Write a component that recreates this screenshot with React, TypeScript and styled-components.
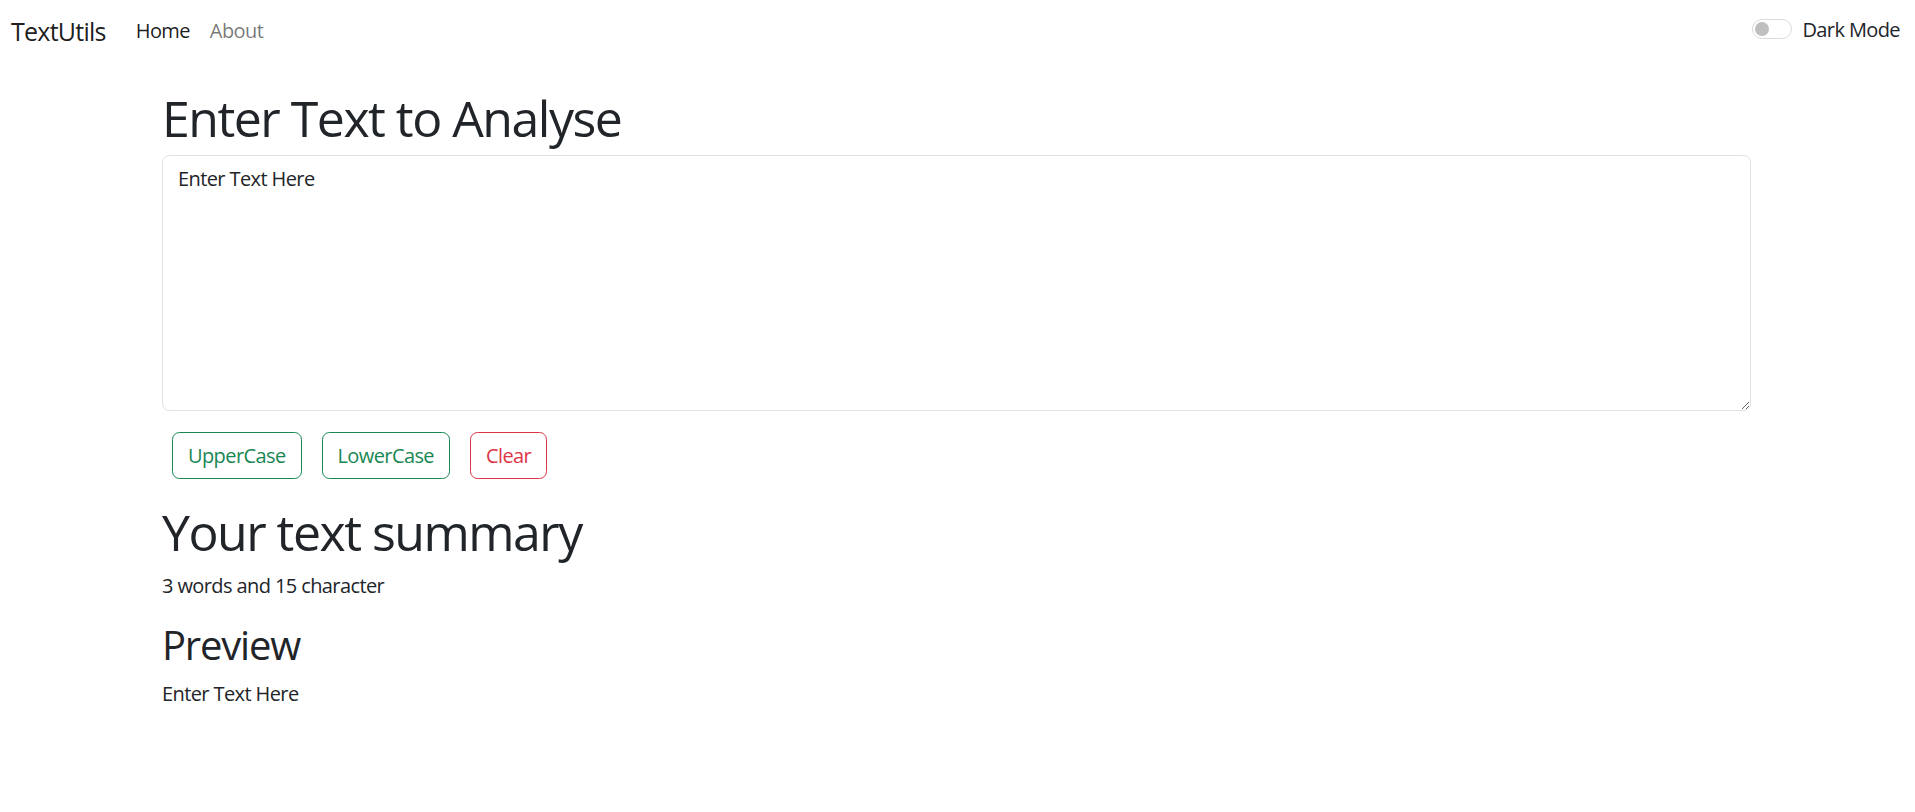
import React, { useState } from "react";
import styled, { createGlobalStyle } from "styled-components";

const GlobalStyle = createGlobalStyle`
  * { box-sizing: border-box; letter-spacing: -0.03em; }
  body {
    margin: 0;
    background: #ffffff;
    color: #212529;
    font-family: "Open Sans", "Noto Sans", sans-serif;
    font-size: 20px;
    line-height: 30px;
  }
`;

const Navbar = styled.nav`
  display: flex;
  align-items: center;
  justify-content: space-between;
  height: 60px;
  padding: 0 15px 0 11px;
`;

const NavLeft = styled.div`
  display: flex;
  align-items: center;
`;

const Brand = styled.a`
  font-size: 25px;
  line-height: 30px;
  color: rgba(0, 0, 0, 0.9);
  text-decoration: none;
  margin-right: 20px;
  padding-top: 2px;
`;

const NavList = styled.ul`
  display: flex;
  list-style: none;
  margin: 0;
  padding: 0;
`;

const NavLink = styled.a<{ $active?: boolean }>`
  display: block;
  padding: 2px 10px 0;
  font-size: 20px;
  line-height: 24px;
  text-decoration: none;
  color: ${(p) => (p.$active ? "rgba(0, 0, 0, 0.9)" : "rgba(0, 0, 0, 0.55)")};
`;

const SwitchLabel = styled.label`
  display: flex;
  align-items: center;
  gap: 10px;
  font-size: 20px;
  line-height: 24px;
  color: #212529;
  cursor: pointer;
`;

const SwitchTrack = styled.span`
  display: flex;
  align-items: center;
  width: 40px;
  height: 20px;
  padding-left: 2px;
  border: 1px solid #dcdcdc;
  border-radius: 10px;
  background: #ffffff;
  margin-top: -3px;
`;

const SwitchKnob = styled.span`
  width: 14px;
  height: 14px;
  border-radius: 50%;
  background: #bfbfbf;
`;

const Main = styled.main`
  width: 1589px;
  margin-left: 162px;
  padding-top: 28px;
`;

const Title = styled.h1`
  margin: 0 0 7px;
  font-size: 50px;
  line-height: 60px;
  font-weight: 400;
`;

const TextArea = styled.textarea`
  display: block;
  width: 100%;
  height: 256px;
  padding: 8px 15px;
  border: 1px solid #dee2e6;
  border-radius: 7.5px;
  font-family: inherit;
  font-size: 20px;
  line-height: 30px;
  color: #212529;
  resize: vertical;
  outline: none;
`;

const ButtonRow = styled.div`
  display: flex;
  gap: 20px;
  padding: 0 10px;
  margin-top: 21px;
`;

const OutlineButton = styled.button<{ $tone: "success" | "danger" }>`
  padding: 7.5px 15px;
  font-family: inherit;
  font-size: 20px;
  line-height: 30px;
  background: transparent;
  border-radius: 7.5px;
  cursor: pointer;
  color: ${(p) => (p.$tone === "success" ? "#198754" : "#dc3545")};
  border: 1px solid ${(p) => (p.$tone === "success" ? "#198754" : "#dc3545")};
`;

const Summary = styled.section`
  margin-top: 23px;
`;

const SummaryTitle = styled.h1`
  margin: 0 0 9px;
  font-size: 50px;
  line-height: 60px;
  font-weight: 400;
`;

const Text = styled.p`
  margin: 0 0 20px;
  font-size: 20px;
  line-height: 30px;
`;

const SubTitle = styled.h2`
  margin: 0 0 10px;
  font-size: 40px;
  line-height: 48px;
  font-weight: 400;
`;

export default function App() {
  const [text, setText] = useState("Enter Text Here");
  const words = text.split(/\s+/).filter((w) => w.length > 0).length;

  return (
    <>
      <GlobalStyle />
      <Navbar>
        <NavLeft>
          <Brand href="#">TextUtils</Brand>
          <NavList>
            <li>
              <NavLink href="#" $active>
                Home
              </NavLink>
            </li>
            <li>
              <NavLink href="#">About</NavLink>
            </li>
          </NavList>
        </NavLeft>
        <SwitchLabel>
          <SwitchTrack>
            <SwitchKnob />
          </SwitchTrack>
          Dark Mode
        </SwitchLabel>
      </Navbar>
      <Main>
        <Title>Enter Text to Analyse</Title>
        <TextArea value={text} onChange={(e) => setText(e.target.value)} rows={8} />
        <ButtonRow>
          <OutlineButton $tone="success" onClick={() => setText(text.toUpperCase())}>
            UpperCase
          </OutlineButton>
          <OutlineButton $tone="success" onClick={() => setText(text.toLowerCase())}>
            LowerCase
          </OutlineButton>
          <OutlineButton $tone="danger" onClick={() => setText("")}>
            Clear
          </OutlineButton>
        </ButtonRow>
        <Summary>
          <SummaryTitle>Your text summary</SummaryTitle>
          <Text>
            {words} words and {text.length} character
          </Text>
          <SubTitle>Preview</SubTitle>
          <Text>{text}</Text>
        </Summary>
      </Main>
    </>
  );
}
